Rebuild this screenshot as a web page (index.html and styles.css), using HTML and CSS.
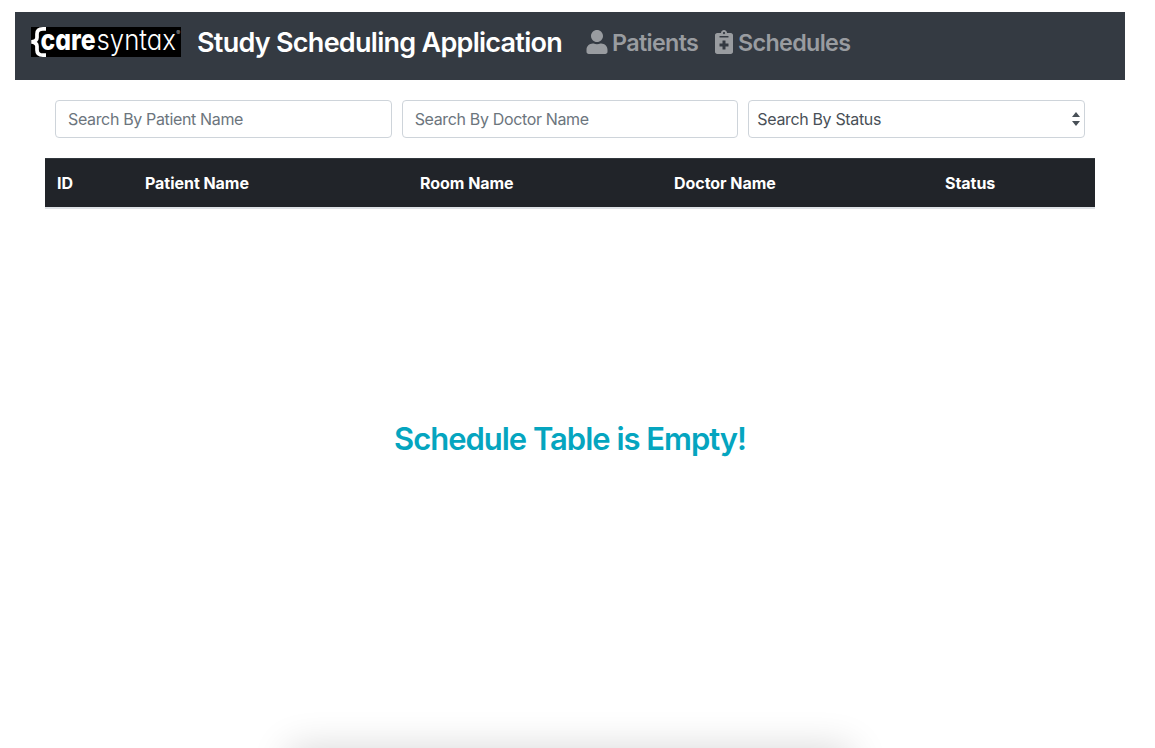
FILE: index.html
```html
<!DOCTYPE html>
<html lang="en">
<head>
<meta charset="utf-8">
<title>Study Scheduling Application</title>
<link rel="stylesheet" href="styles.css">
</head>
<body>
<header class="navbar">
  <svg class="logo" viewBox="0 0 150 30" role="img" aria-label="caresyntax">
    <rect width="150" height="30" fill="#000"/>
    <path d="M15 1.900H12Q6 1.900 6 7V10.500Q6 14.200 0.500 14.900Q6 15.600 6 19.300V23Q6 28.200 12 28.200H15" fill="none" stroke="#fff" stroke-width="3.700"/>
    <text class="logo-bold" x="9.500" y="22.700" textLength="55" lengthAdjust="spacingAndGlyphs">care</text>
    <text class="logo-light" x="65.500" y="22.700" textLength="79.500" lengthAdjust="spacingAndGlyphs">syntax</text>
    <text class="logo-mark" x="145.300" y="7.500">®</text>
  </svg>
  <h3 class="brand">Study Scheduling Application</h3>
  <nav class="links">
    <a class="link link-patients">
      <svg class="icon-user" viewBox="0 0 448 512"><path fill="currentColor" d="M224 256c70.700 0 128-57.300 128-128S294.700 0 224 0 96 57.300 96 128s57.300 128 128 128zm89.600 32h-16.700c-22.200 10.200-46.900 16-72.900 16s-50.600-5.800-72.900-16h-16.700C60.200 288 0 348.200 0 422.400V464c0 26.500 21.500 48 48 48h352c26.500 0 48-21.500 48-48v-41.600c0-74.200-60.200-134.400-134.400-134.400z"/></svg>
      <span>Patients</span>
    </a>
    <a class="link">
      <svg class="icon-clip" viewBox="0 0 384 512"><path fill="currentColor" fill-rule="evenodd" d="M336 64h-80c0-35.300-28.700-64-64-64s-64 28.700-64 64H48C21.500 64 0 85.500 0 112v352c0 26.500 21.500 48 48 48h288c26.500 0 48-21.500 48-48V112c0-26.500-21.500-48-48-48zM192 40c13.300 0 24 10.700 24 24s-10.700 24-24 24-24-10.700-24-24 10.700-24 24-24zm96 304c0 4.400-3.600 8-8 8h-56v56c0 4.400-3.600 8-8 8h-48c-4.400 0-8-3.600-8-8v-56h-56c-4.400 0-8-3.600-8-8v-48c0-4.400 3.600-8 8-8h56v-56c0-4.400 3.600-8 8-8h48c4.400 0 8 3.600 8 8v56h56c4.400 0 8 3.600 8 8v48zm0-192c0 4.400-3.600 8-8 8H104c-4.400 0-8-3.600-8-8v-16c0-4.400 3.600-8 8-8h176c4.400 0 8 3.600 8 8v16z"/></svg>
      <span>Schedules</span>
    </a>
  </nav>
</header>
<main class="content">
  <form class="filters">
    <input class="field" type="text" placeholder="Search By Patient Name">
    <input class="field" type="text" placeholder="Search By Doctor Name">
    <div class="select">
      <span>Search By Status</span>
      <svg class="caret" viewBox="0 0 8 16"><path fill="#495057" d="M0 6L4 1L8 6zM0 10H8L4 15z"/></svg>
    </div>
  </form>
  <div class="table-head">
    <span>ID</span>
    <span>Patient Name</span>
    <span>Room Name</span>
    <span>Doctor Name</span>
    <span>Status</span>
  </div>
  <h2 class="empty">Schedule Table is Empty!</h2>
</main>
<div class="edge"><div class="edge-shadow"></div></div>
</body>
</html>
```
FILE: styles.css
```css
* { box-sizing: border-box; }
html, body { height: 100%; }
body {
  margin: 0;
  padding: 12px 30px 0 15px;
  background: #fff;
  font-family: Inter, "Liberation Sans", sans-serif;
  font-size: 16px;
  line-height: 24px;
  position: relative;
}
.navbar {
  height: 68px;
  padding: 8px 16px;
  background: #343a42;
  display: flex;
  align-items: flex-start;
}
.logo { width: 150px; height: 30px; margin: 7px 16px 0 0; flex: none; overflow: visible; }
.logo text { fill: #fff; font-feature-settings: "cv11"; }
.logo-bold { font-size: 29px; font-weight: 800; }
.logo-light { font-size: 29px; font-weight: 300; }
.logo .logo-mark { font-size: 6px; fill: #aaa; }
.brand {
  margin: 6px 0 0;
  width: 389px;
  color: #fff;
  font-size: 27px;
  font-weight: 600;
  line-height: 34px;
  letter-spacing: -0.73px;
  white-space: nowrap;
}
.links { display: flex; padding-top: 5px; }
.link {
  display: flex;
  align-items: center;
  height: 36px;
  color: #999ca0;
  font-size: 23.3px;
  font-weight: 600;
  letter-spacing: -0.65px;
  white-space: nowrap;
}
.link-patients { width: 129px; }
.icon-user { width: 22px; height: 24px; margin: -2px 4px 0 0; }
.icon-clip { width: 18px; height: 24px; margin: -2px 5px 0 0; }
.content { padding: 20px 30px 0; }
.filters {
  display: grid;
  grid-template-columns: repeat(3, 1fr);
  gap: 10px;
  padding: 0 10px;
}
.field, .select {
  width: 100%;
  min-width: 0;
  height: 38px;
  border: 1px solid #ced4da;
  border-radius: 4px;
  background: #fff;
  color: #495057;
  font: inherit;
  letter-spacing: -0.35px;
}
.field { padding: 6px 12px; }
.field::placeholder { color: #6c757d; opacity: 1; }
.select {
  display: flex;
  align-items: center;
  justify-content: space-between;
  padding: 0 4px 0 8px;
}
.caret { width: 8px; height: 16px; }
.table-head {
  display: grid;
  grid-template-columns: 88px 275px 254px 271px 162px;
  height: 51px;
  margin-top: 20px;
  padding-top: 12px;
  background: #212429;
  border-top: 1px solid #32383e;
  border-bottom: 2px solid #dee2e6;
  color: #fff;
  font-weight: 700;
  letter-spacing: -0.04px;
}
.table-head span { padding-left: 12px; white-space: nowrap; }
.empty {
  margin: 211px 0 0;
  color: #05a5bf;
  font-size: 31px;
  font-weight: 600;
  line-height: 38px;
  letter-spacing: -1.02px;
  text-align: center;
}
.edge {
  position: absolute;
  inset: 0;
  overflow: clip;
  pointer-events: none;
}
.edge-shadow {
  width: 562px;
  height: 100px;
  margin: 748px 0 0 289px;
  box-shadow: 0 0 38px rgba(0, 0, 0, .16);
}
```
